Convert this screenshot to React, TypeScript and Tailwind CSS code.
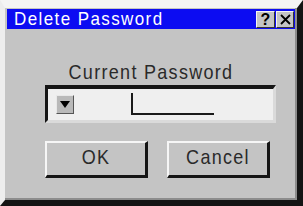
import React from "react";

export default function App() {
  return (
    <div
      className="w-[303px] h-[206px] flex flex-col bg-[#c4c4c4] border-t-[8px] border-l-[5px] border-r-[6px] border-b-[6px] border-t-[#f4f4f4] border-l-[#ededed] border-r-[#141414] border-b-[#141414] shadow-[inset_-2px_-2px_0_#8c8c8c] overflow-hidden"
      style={{ fontFamily: '"Liberation Sans", Arial, sans-serif' }}
    >
      {/* title bar */}
      <div className="mt-[1px] ml-[2px] mr-[2px] h-[20px] bg-[#0c0cf2] flex items-center">
        <span className="pl-[7px] flex-1 flex">
          <span className="inline-block text-[17px] leading-[20px] tracking-[1.4px] text-white scale-y-[1.12]">
            Delete Password
          </span>
        </span>
        <div className="flex gap-[1px] mr-[1px] self-end mb-[1px]">
          <div className="w-[19px] h-[17px] bg-[#c4c4c4] border-t border-l border-t-[#f4f4f4] border-l-[#f4f4f4] border-r border-b border-r-[#333] border-b-[#333] flex items-center justify-center text-[16px] font-bold leading-none text-black">
            ?
          </div>
          <div className="w-[18px] h-[17px] bg-[#c4c4c4] border-t border-l border-t-[#f4f4f4] border-l-[#f4f4f4] border-r border-b border-r-[#333] border-b-[#333] flex items-center justify-center">
            <svg width="11" height="11" viewBox="0 0 11 11">
              <path d="M1 1 L10 10 M10 1 L1 10" stroke="#000" strokeWidth="1.8" />
            </svg>
          </div>
        </div>
      </div>

      {/* label */}
      <div className="mt-[32px] flex justify-center">
        <span className="inline-block text-[18px] leading-[22px] tracking-[1.3px] text-[#2a2a2a] scale-y-[1.12]">
          Current Password
        </span>
      </div>

      {/* input */}
      <div className="mt-[2px] ml-[40px] w-[231px] h-[38px] bg-[#efefef] border-t-[4px] border-l-[3px] border-t-[#151515] border-l-[#151515] border-r-[3px] border-b-[3px] border-r-[#dadada] border-b-[#dadada] flex items-start">
        <div className="mt-[6px] ml-[8px] w-[18px] h-[19px] bg-[#b9b9b9] border-t border-l border-t-[#e8e8e8] border-l-[#e8e8e8] border-r border-b border-r-[#555] border-b-[#555] flex items-center justify-center">
          <svg width="10" height="7" viewBox="0 0 10 7">
            <path d="M0 0 H10 L5 7 Z" fill="#000" />
          </svg>
        </div>
        <div className="mt-[4px] ml-[57px] w-[83px] h-[22px] border-l-2 border-b-2 border-[#1a1a1a]" />
      </div>

      {/* buttons */}
      <div className="mt-[18px] ml-[40px] flex gap-[19px]">
        <div className="w-[103px] h-[37px] bg-[#c4c4c4] border-t-2 border-l-2 border-t-[#f6f6f6] border-l-[#f6f6f6] border-r-[3px] border-b-[3px] border-r-[#151515] border-b-[#151515] flex items-center justify-center pb-[3px]">
          <span className="inline-block text-[18px] tracking-[1.3px] text-[#2a2a2a] scale-y-[1.12]">OK</span>
        </div>
        <div className="w-[103px] h-[37px] bg-[#c4c4c4] border-t-2 border-l-2 border-t-[#f6f6f6] border-l-[#f6f6f6] border-r-[3px] border-b-[3px] border-r-[#151515] border-b-[#151515] flex items-center justify-center pb-[3px]">
          <span className="inline-block text-[18px] tracking-[1.3px] text-[#2a2a2a] scale-y-[1.12]">Cancel</span>
        </div>
      </div>
    </div>
  );
}
